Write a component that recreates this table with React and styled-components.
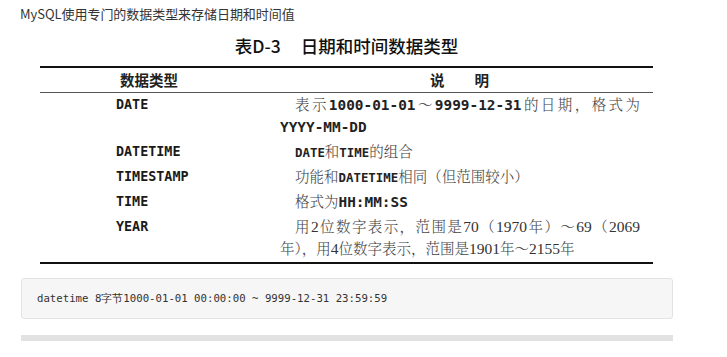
import React from "react";
import styled, { createGlobalStyle } from "styled-components";

const Global = createGlobalStyle`
  html, body { margin: 0; padding: 0; background: #fff; }
  body { font-family: "Noto Sans CJK SC", "Noto Sans", sans-serif; }
`;

const Page = styled.div`
  padding: 0 0 0 20px;
  width: 654px;
`;

const Intro = styled.p`
  margin: 0;
  padding-top: 4px;
  height: 20px;
  font-size: 13px;
  line-height: 20px;
  color: #333;
  font-family: "Noto Sans CJK SC", "Noto Sans", sans-serif;
  letter-spacing: -0.05px;
`;

const Title = styled.h3`
  margin: 10px 0 8px 20px;
  width: 613px;
  height: 24px;
  text-align: center;
  font-size: 17.5px;
  line-height: 24px;
  font-weight: 500;
  color: #111;
  font-family: "Noto Sans CJK SC", sans-serif;
`;

const TitleNum = styled.span`
  margin-right: 20px;
`;

const Table = styled.div`
  margin-left: 20px;
  width: 613px;
  border-top: 2px solid #111;
  border-bottom: 2px solid #111;
`;

const Row = styled.div`
  display: grid;
  grid-template-columns: 240px 1fr;
  padding-bottom: ${(p) => (p.$head ? "0" : "3px")};
  border-bottom: ${(p) => (p.$head ? "1px solid #555" : "none")};
`;

const HeadCell = styled.div`
  height: 24px;
  line-height: 24px;
  font-size: 14.5px;
  font-weight: 700;
  color: #222;
  padding-left: ${(p) => (p.$left ? "80px" : "0")};
  text-align: ${(p) => (p.$left ? "left" : "center")};
  padding-right: ${(p) => (p.$left ? "0" : "14px")};
`;

const Gap = styled.span`
  display: inline-block;
  width: 30px;
`;

const TypeCell = styled.div`
  box-sizing: border-box;
  padding: 1px 0 0 76px;
  height: 22px;
  line-height: 22px;
  font-family: "DejaVu Sans Mono", "Liberation Mono", monospace;
  font-size: 13.4px;
  font-weight: 700;
  color: #1a1a1a;
`;

const Desc = styled.div`
  padding-right: 13px;
  font-family: "Noto Serif CJK SC", "Noto Sans CJK SC", serif;
  font-size: 14.5px;
  font-weight: 300;
  line-height: 22px;
  color: #444;
`;

const Line = styled.div`
  height: 22px;
  text-indent: ${(p) => (p.$first ? "15px" : "0")};
  text-align: ${(p) => (p.$justify ? "justify" : "left")};
  text-align-last: ${(p) => (p.$justify ? "justify" : "auto")};
  white-space: nowrap;
`;

const Mono = styled.span`
  font-family: "DejaVu Sans Mono", "Liberation Mono", monospace;
  font-size: ${(p) => (p.$big ? "14.4px" : "12.4px")};
  line-height: 1;
  font-weight: 600;
  color: #222;
`;

const Num = styled.span`
  font-family: "Liberation Serif", "Times New Roman", serif;
  font-size: 15.5px;
  line-height: 1;
  color: #333;
`;

const CodeBox = styled.div`
  margin: 14px 0 0 1px;
  width: 652px;
  height: 41px;
  box-sizing: border-box;
  border: 1px solid #e3e3e3;
  border-radius: 3px;
  background: #f6f6f6;
  display: flex;
  align-items: center;
  padding: 0 15px;
`;

const Code = styled.code`
  font-family: "DejaVu Sans Mono", "Liberation Mono", monospace;
  font-size: 10.7px;
  color: #333;
`;

const Bar = styled.div`
  margin: 16px 0 0 1px;
  width: 652px;
  height: 6px;
  background: #e2e2e2;
`;

export default function App() {
  return (
    <>
      <Global />
      <Page>
        <Intro>MySQL使用专门的数据类型来存储日期和时间值</Intro>
        <Title>
          <TitleNum>表D-3</TitleNum>日期和时间数据类型
        </Title>
        <Table>
          <Row $head>
            <HeadCell $left>数据类型</HeadCell>
            <HeadCell>
              说<Gap />明
            </HeadCell>
          </Row>
          <Row>
            <TypeCell>DATE</TypeCell>
            <Desc>
              <Line $first $justify>
                表示<Mono $big>1000-01-01</Mono>～<Mono $big>9999-12-31</Mono>的日期，格式为
              </Line>
              <Line>
                <Mono $big>YYYY-MM-DD</Mono>
              </Line>
            </Desc>
          </Row>
          <Row>
            <TypeCell>DATETIME</TypeCell>
            <Desc>
              <Line $first>
                <Mono>DATE</Mono>和<Mono>TIME</Mono>的组合
              </Line>
            </Desc>
          </Row>
          <Row>
            <TypeCell>TIMESTAMP</TypeCell>
            <Desc>
              <Line $first>
                功能和<Mono>DATETIME</Mono>相同（但范围较小）
              </Line>
            </Desc>
          </Row>
          <Row>
            <TypeCell>TIME</TypeCell>
            <Desc>
              <Line $first>
                格式为<Mono $big>HH:MM:SS</Mono>
              </Line>
            </Desc>
          </Row>
          <Row>
            <TypeCell>YEAR</TypeCell>
            <Desc>
              <Line $first $justify>
                用<Num>2</Num>位数字表示，范围是<Num>70</Num>（<Num>1970</Num>年）～<Num>69</Num>（<Num>2069</Num>
              </Line>
              <Line>
                年），用<Num>4</Num>位数字表示，范围是<Num>1901</Num>年～<Num>2155</Num>年
              </Line>
            </Desc>
          </Row>
        </Table>
        <CodeBox>
          <Code>datetime 8字节1000-01-01 00:00:00 ~ 9999-12-31 23:59:59</Code>
        </CodeBox>
        <Bar />
      </Page>
    </>
  );
}
